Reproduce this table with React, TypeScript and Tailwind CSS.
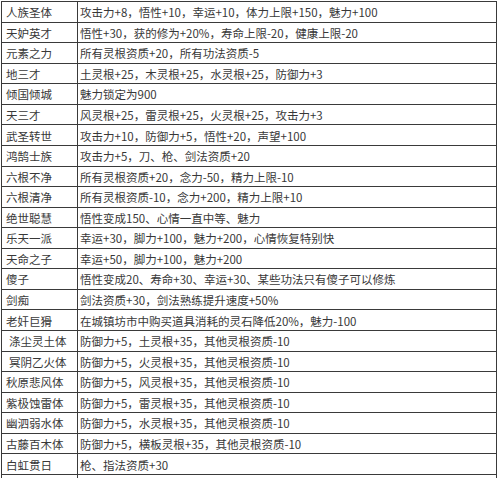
const rows: [string, string, string?][] = [
  ['人族圣体', '攻击力+8，悟性+10，幸运+10，体力上限+150，魅力+100'],
  ['天妒英才', '悟性+30，获的修为+20%，寿命上限-20，健康上限-20'],
  ['元素之力', '所有灵根资质+20，所有功法资质-5'],
  ['地三才', '土灵根+25，木灵根+25，水灵根+25，防御力+3'],
  ['倾国倾城', '魅力锁定为900'],
  ['天三才', '风灵根+25，雷灵根+25，火灵根+25，攻击力+3'],
  ['武圣转世', '攻击力+10，防御力+5，悟性+20，声望+100'],
  ['鸿鹄士族', '攻击力+5，刀、枪、剑法资质+20'],
  ['六根不净', '所有灵根资质+20，念力-50，精力上限-10'],
  ['六根清净', '所有灵根资质-10，念力+200，精力上限+10'],
  ['绝世聪慧', '悟性变成150、心情一直中等、魅力'],
  ['乐天一派', '幸运+30，脚力+100，魅力+200，心情恢复特别快'],
  ['天命之子', '幸运+50，脚力+100，魅力+200'],
  ['傻子', '悟性变成20、寿命+30、幸运+30、某些功法只有傻子可以修炼'],
  ['剑痴', '剑法资质+30，剑法熟练提升速度+50%'],
  ['老奸巨猾', '在城镇坊市中购买道具消耗的灵石降低20%，魅力-100'],
  ['涤尘灵土体', '防御力+5，土灵根+35，其他灵根资质-10', 'pl-[7px]'],
  ['冥阴乙火体', '防御力+5，火灵根+35，其他灵根资质-10', 'pl-[7px]'],
  ['秋原悲风体', '防御力+5，风灵根+35，其他灵根资质-10', 'pl-[4px]'],
  ['紫极蚀雷体', '防御力+5，雷灵根+35，其他灵根资质-10', 'pl-[4px]'],
  ['幽泗弱水体', '防御力+5，水灵根+35，其他灵根资质-10', 'pl-[4px]'],
  ['古藤百木体', '防御力+5，横板灵根+35，其他灵根资质-10', 'pl-[4px]'],
  ['白虹贯日', '枪、指法资质+30'],
  ['', ''],
];

export default function App() {
  return (
    <div
      className="w-[500px] h-[478px] overflow-hidden bg-white text-[11.5px] text-[#383838]"
      style={{ fontFamily: '"Microsoft YaHei", "Noto Sans CJK SC", "Noto Sans", sans-serif' }}
    >
      <div className="mt-px ml-px w-[496px] border-t border-l border-r border-[#3a3a3a]">
        {rows.map(([name, effect, pad], i) => (
          <div key={i} className="flex h-[20.57px] border-b border-[#3a3a3a]">
            <div
              className={`${pad ?? 'pl-[4px]'} w-[76px] shrink-0 border-r border-[#3a3a3a] flex items-center pt-[2px] whitespace-nowrap overflow-hidden`}
            >
              {name}
            </div>
            <div className="flex-1 pl-[2px] flex items-center pt-[2px] whitespace-nowrap overflow-hidden">
              {effect}
            </div>
          </div>
        ))}
      </div>
    </div>
  );
}
